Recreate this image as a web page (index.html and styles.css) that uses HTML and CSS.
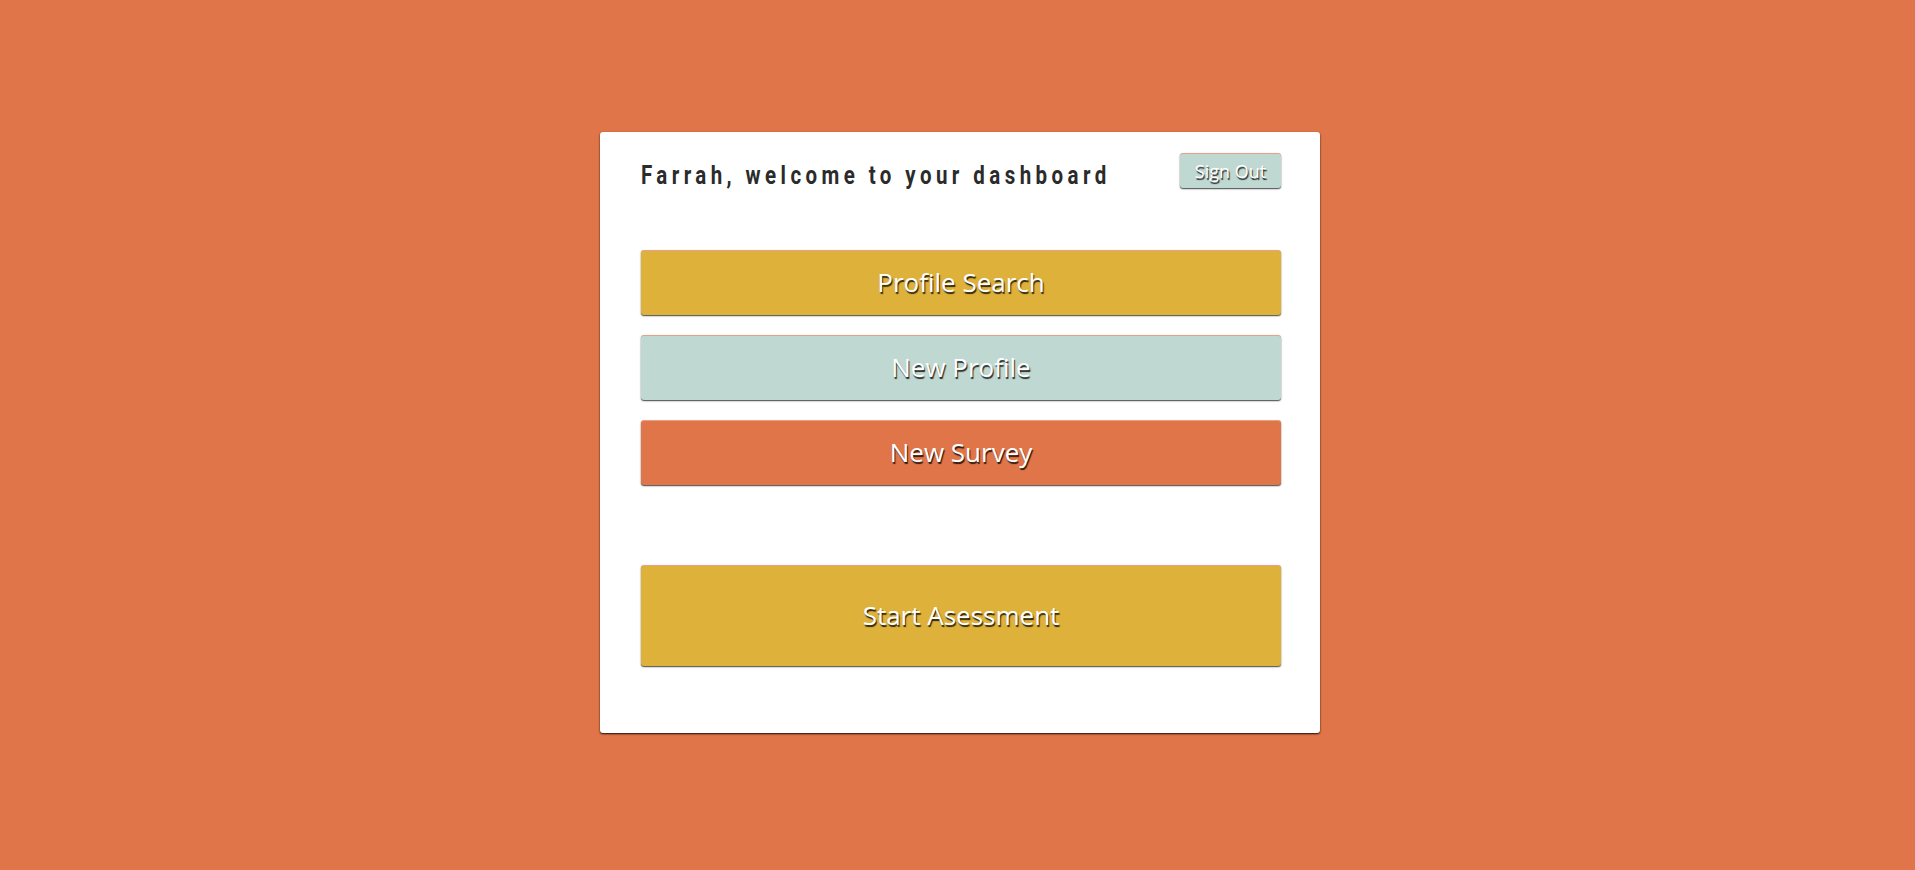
FILE: index.html
```html
<!DOCTYPE html>
<html>
<head>
<meta charset="utf-8">
<link rel="stylesheet" href="styles.css">
</head>
<body>
<main class="page">
  <section class="card">
    <header class="card-head">
      <h1 class="title">Farrah, welcome to your dashboard</h1>
      <button class="btn btn-mint btn-small">Sign Out</button>
    </header>
    <nav class="actions">
      <button class="btn btn-gold btn-wide">Profile Search</button>
      <button class="btn btn-mint btn-wide">New Profile</button>
      <button class="btn btn-orange btn-wide">New Survey</button>
    </nav>
    <button class="btn btn-gold btn-big">Start Asessment</button>
  </section>
</main>
</body>
</html>
```

FILE: styles.css
```css
html, body {
  margin: 0;
  padding: 0;
  background: #e07549;
  height: 100%;
}

.page {
  display: flex;
  justify-content: center;
  padding: 132px 0 0 5px;
}

.card {
  width: 720px;
  box-sizing: border-box;
  background: #fff;
  border-radius: 3px;
  box-shadow: 0 1px 2px rgba(0, 0, 0, 0.9);
  padding: 21px 39px 67px 41px;
  display: flex;
  flex-direction: column;
}

.card-head {
  display: flex;
  justify-content: space-between;
  align-items: flex-start;
  height: 36px;
}

.title {
  flex: 1;
  min-width: 0;
  margin: 0;
  font-family: "Roboto", "Liberation Sans", sans-serif;
  font-weight: 700;
  font-size: 25px;
  letter-spacing: 5.4px;
  line-height: 30px;
  white-space: nowrap;
  color: #2b2b2b;
  padding-top: 8px;
  transform: scaleX(0.82);
  transform-origin: left center;
}

.btn {
  font-family: "Open Sans", "Lato", sans-serif;
  color: #fff;
  text-shadow: 1px 2px 1px rgba(0, 0, 0, 0.8);
  border: none;
  border-top: 1px solid #e9a186;
  border-radius: 3px;
  box-shadow: 0 1px 1.5px rgba(0, 0, 0, 0.75);
  cursor: pointer;
  padding: 0;
}

.btn-gold { background: #ddb13a; }
.btn-mint { background: #bfd8d2; }
.btn-orange { background: #e07549; }

.btn-small {
  width: 101px;
  height: 35px;
  font-size: 18px;
  flex: none;
  padding-bottom: 1px;
}

.actions {
  display: flex;
  flex-direction: column;
  gap: 20px;
  margin-top: 61px;
}

.btn-wide {
  width: 100%;
  height: 65px;
  font-size: 26px;
  padding-bottom: 3px;
}

.btn-big {
  width: 100%;
  height: 101px;
  font-size: 26px;
  margin-top: 80px;
  padding-bottom: 3px;
}
```
